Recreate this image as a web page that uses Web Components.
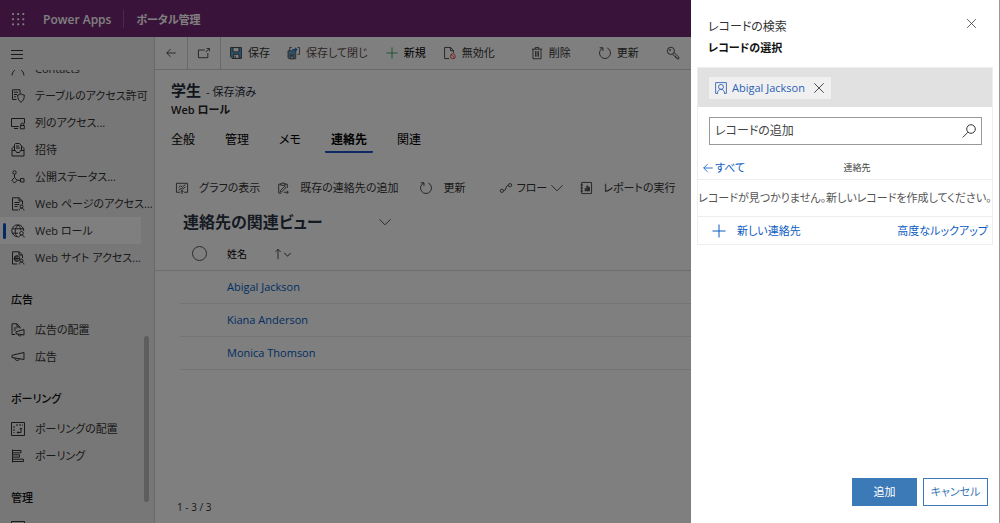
<!DOCTYPE html>
<html lang="ja">
<head>
<meta charset="utf-8">
<meta name="viewport" content="width=device-width, initial-scale=1">
<title>ポータル管理 - Power Apps</title>
<style>
  html, body { margin: 0; height: 100%; }
  body {
    font-family: "Open Sans", "Noto Sans CJK JP", sans-serif;
    font-size: 11px;
    line-height: 16px;
    font-feature-settings: "palt";
    color: #333;
    background: #fff;
    overflow: hidden;
  }
</style>
</head>
<body>
<portal-app></portal-app>

<script>
const RESET = `
  *, *::before, *::after { box-sizing: border-box; }
  button, input, a { font: inherit; font-feature-settings: inherit; color: inherit; }
  button { margin: 0; padding: 0; border: 0; background: none; cursor: pointer; }
  a { text-decoration: none; }
  h1, h2, h3, p, ul { margin: 0; padding: 0; font-size: inherit; font-weight: inherit; list-style: none; }
`;

function define(name, css, html) {
  customElements.define(name, class extends HTMLElement {
    constructor() {
      super();
      const attr = (key) => this.getAttribute(key) || '';
      const root = this.attachShadow({ mode: 'open' });
      const template = document.createElement('template');
      template.innerHTML = `<style>${RESET}${css}</style>${typeof html === 'function' ? html(attr) : html}`;
      root.append(template.content.cloneNode(true));
    }
  });
}

/* Line icons, all on a 14 x 14 grid */
const ICONS = {
  waffle: '<g fill="currentColor" stroke="none">' +
    [0, 6, 12].map(y => [0, 6, 12].map(x => `<rect x="${x}" y="${y}" width="2.400" height="2.400" rx="1"/>`).join('')).join('') + '</g>',
  menu: '<path d="M1 3.5h12M1 7.5h12M1 11.5h12"/>',
  back: '<path d="M12.5 7H2M6.5 2.5 2 7l4.500 4.500"/>',
  popout: '<path d="M8 3.500H.500v9h11V7M9 6l4-4M10 1.700h3.300V5"/>',
  save: '<path fill="#5aa9e0" d="M.700.700h12.600v12.600H2.500L.700 11.500z"/><path fill="#fff" d="M3.500.700h7v5h-7zM4 8.500h6.500v4.800H4z"/><path d="M6 10v3"/>',
  saveclose: '<path fill="#5aa9e0" d="M0 4.500h9v9.200H1.200L0 12.500z"/><path fill="#fff" d="M2.500 8.500h4v1.500h-4zM2.500 11.500h4v2.200h-4z"/><path d="M2 4.500v-4h2.500M11 .5h2.500v8H11"/><path stroke="#1f7ad0" stroke-width="1.500" d="M5 3h5M8.300 1 10.300 3l-2 2"/>',
  plus: '<path d="M7 .5v13M.5 7h13"/>',
  disable: '<path d="M6 13.500H.700V.500h7L11 4.200V7M7.500.500v3.800H11"/><circle cx="10.300" cy="10.800" r="2.900" stroke="#d8362c"/><path stroke="#d8362c" d="m8.200 8.800 4.200 4"/>',
  trash: '<path d="M1 2.500h12M5 2.500V.500h4v2M2.300 2.500v11.200h9.400V2.500M5.300 4.800v6.500M7 4.800v6.500M8.700 4.800v6.500"/>',
  refresh: '<path d="M4.300 1.200A6.400 6.400 0 1 0 9.700 1.200M.800.900h3.800v3.800"/>',
  key: '<circle cx="4.500" cy="4.500" r="4.200"/><circle cx="3.500" cy="3.500" r=".7"/><path d="m8.300 6.500 5.500 5.300v2h-2.200v-1.500H10v-1.600H8.500L6.700 8.400"/>',
  contact: '<path d="M1 13.500C1 10 4 7.500 5 7.300M13 13.500c0-3.500-3-6-4-6.200"/><circle cx="7" cy="4" r="3.300"/>',
  tableperm: '<path d="M5.500 10.500h-4V.800h7.500v4M3 3.200h4M3 5.500h3M3 7.800h2M10 4.800c1 .8 2 1.200 3.300 1.200 0 3.500-.6 5.300-3.300 7.300-2.700-2-3.300-3.800-3.300-7.300 1.300 0 2.300-.4 3.300-1.200z"/>',
  columnperm: '<path d="M7.500 10.500h-7v-8h13v5M3 12.500h4"/><path d="M9.300 9.500h4v3.300h-4zM10 9.500V8.300a1.300 1.300 0 0 1 2.600 0v1.200"/>',
  invite: '<path d="M1 5.500v7.500h12V5.500L10.500 3M1 5.500 3.500 3M1 7.500h3.500l1 2h3l1-2H13M3.500 7V1.500l1-1h4L10.500 3v4M5 3h3M5 5h4"/>',
  flowstate: '<circle cx="3.500" cy="2.500" r="1.700"/><path d="m3.500 7.500 2.700 2.800-2.700 2.800L.8 10.300zM3.500 4.200v3.300M6.200 10.300h3.300M9.500 8.600H13V12H9.500z"/>',
  pageperm: '<path d="M7 13H1.500V.800H8L11.500 4v3.500M8 .800V4h3.500M3.500 5.500h5M3.500 7.500h5M3.500 9.500h3"/><circle cx="10.500" cy="9.500" r="1.500"/><path d="M8 13.500c.3-1.600 1.200-2.400 2.500-2.400s2.200.8 2.500 2.400"/>',
  globe: '<path d="M7 12.800A6 6 0 1 1 12.800 7M6 12.800C3.500 9.500 3.500 4.500 7 1c2 1.800 2.800 3.500 3 5.500M1.500 4.800h11M1.300 9.200H7"/><circle cx="10.500" cy="9.300" r="1.800"/><path d="M7.800 13.500c.3-1.600 1.300-2.400 2.700-2.400s2.400.8 2.700 2.400"/>',
  siteperm: '<path d="M6 13H1.500V.800H8L11.500 4v3M8 .800V4h3.500"/><circle cx="6" cy="7.500" r="2.800"/><path d="M3.200 7.500h5.600M6 4.700v5.600M4.600 5.200c-.7 1.500-.7 3.100 0 4.600"/><circle cx="10.500" cy="9.500" r="1.500"/><path d="M8 13.500c.3-1.600 1.200-2.400 2.500-2.400s2.200.8 2.500 2.400"/>',
  adplace: '<path d="M4 11.500H1V.800h5L9 4v1.500M6 .800V4h3M2.800 5h3M2.800 7h2M5 8.800l8-2.300v5.500L5 10.700zM7 11.300c0 2 3 2.300 3.400.5"/>',
  ad: '<path d="M1 5.300 13 2.500v7L1 7.500zM3.800 8c0 3 4.200 3.200 4.700.8"/>',
  pollplace: '<path d="M.500.500h13v13H.500z"/><path stroke-dasharray="2 1" d="M3 4v7M5 3h7"/><path d="M6 10.500h4V6M8.700 7.200 10 5.900l1.300 1.300M7.300 9.300l-1.200 1.200 1.200 1.200"/>',
  poll: '<path d="M1.500.5v13M1.500 1.500H10v2.300H1.500M1.500 5.800h7v2.300h-7M1.500 10.200h11v2.300h-11"/>',
  chart: '<path d="M4.500 12H.500V1.500h13V12H9.500M3 6.500l2.500-2 2 1.500L11 3M3 9.500l3-2 2 1 3-3M7 14V9.800M5.300 11.500 7 9.800l1.700 1.700"/>',
  clipboard: '<path d="M5 13H2V2.500h2.500M9.500 2.500H12V7M4.500 3.800v-2h1.500a1 1 0 0 1 2 0h1.500v2zM4 10l5-5 1.500 1.500-5 5H4zM8 12h5M11.300 10l2 2-2 1.700"/>',
  flow: '<circle cx="2.200" cy="10.300" r="1.900"/><circle cx="11.800" cy="3.700" r="1.900"/><path d="M4.100 10.300C8 10.300 6 3.700 9.900 3.700"/>',
  report: '<path d="M2 .5h11.500v13H2zM.5 3.500h3M.5 7h3M.5 10.500h3M6 10.500V7.500h1v3zM8 10.500v-6h1v6zM10 10.500V6h1v4.500z"/>',
  chevron: '<path d="m.5 3.800 6.500 6.500 6.500-6.500"/>',
  up: '<path d="M7 13V1.500M4 4.500l3-3 3 3"/>',
  close: '<path d="m1.500 1.500 11 11M12.500 1.500l-11 11"/>',
  search: '<circle cx="9" cy="5" r="4.300"/><path d="M6 8.200.700 13.500"/>',
  person: '<path d="M3.300 13.300H.700V.700h12.600v12.600h-2.600"/><circle cx="7" cy="5.700" r="2.900"/><path d="M2.800 13.300c.2-3.200 1.900-4.700 4.200-4.700s4 1.500 4.200 4.700"/>'
};

define('line-icon',
  `:host { display: inline-flex; flex: none; width: 14px; height: 14px; }
   :host([size="s"]) { width: 7px; height: 7px; }
   :host([size="m"]) { width: 12px; height: 12px; }
   svg { width: 100%; height: 100%; fill: none; stroke: currentColor; stroke-width: 1; overflow: visible; }
   :host([size="s"]) svg { stroke-width: 2; }`,
  (attr) => `<svg viewBox="0 0 14 14" aria-hidden="true">${ICONS[attr('name')]}</svg>`);

define('app-header',
  `:host { display: flex; align-items: center; height: 37px; padding: 0 12px; background: #742774; color: #fff; font-weight: 600; }
   button { display: flex; margin-right: 19px; }
   .brand { font-size: 12px; line-height: 18px; padding-top: 2px; }
   .area { margin-left: 12px; padding: 2px 0 0 12px; border-left: 1px solid #935593; }`,
  `<button aria-label="アプリ起動ツール"><line-icon name="waffle" size="m"></line-icon></button>
   <span class="brand">Power Apps</span><span class="area">ポータル管理</span>`);

define('nav-item',
  `:host { display: block; }
   a { position: relative; display: flex; align-items: center; gap: 10px; height: 27px; margin-right: 13px; padding-left: 11px; white-space: nowrap; color: #333; }
   :host([current]) a { background: #fff; }
   :host([current]) a::before { content: ""; position: absolute; left: 3px; top: 6px; bottom: 5px; width: 3px; border-radius: 2px; background: #0b53ce; }`,
  (attr) => `<a href="#"><line-icon name="${attr('icon')}"></line-icon><slot></slot></a>`);

define('nav-group',
  `:host { display: block; }
   h3 { height: 45px; padding: 21px 0 0 11px; font-weight: 500; color: #111; }`,
  (attr) => `<h3>${attr('label')}</h3><slot></slot>`);

define('side-nav',
  `:host { position: relative; display: flex; flex-direction: column; min-height: 0; background: #efefef; border-right: 1px solid #d2d2d2; }
   .toggle { display: flex; align-items: center; height: 33px; flex: none; padding-left: 10px; }
   .list { flex: 1; min-height: 0; overflow: hidden; }
   .scrolled { margin-top: -15px; }
   .thumb { position: absolute; right: 5px; top: 299px; width: 5px; height: 166px; border-radius: 3px; background: #bcbcbc; }`,
  `<button class="toggle" aria-label="メニュー"><line-icon name="menu"></line-icon></button>
   <nav class="list"><div class="scrolled">
     <nav-item icon="contact">Contacts</nav-item>
     <nav-item icon="tableperm">テーブルのアクセス許可</nav-item>
     <nav-item icon="columnperm">列のアクセス...</nav-item>
     <nav-item icon="invite">招待</nav-item>
     <nav-item icon="flowstate">公開ステータス...</nav-item>
     <nav-item icon="pageperm">Web ページのアクセス...</nav-item>
     <nav-item icon="globe" current>Web ロール</nav-item>
     <nav-item icon="siteperm">Web サイト アクセス...</nav-item>
     <nav-group label="広告">
       <nav-item icon="adplace">広告の配置</nav-item>
       <nav-item icon="ad">広告</nav-item>
     </nav-group>
     <nav-group label="ポーリング">
       <nav-item icon="pollplace">ポーリングの配置</nav-item>
       <nav-item icon="poll">ポーリング</nav-item>
     </nav-group>
     <nav-group label="管理">
       <nav-item icon="pollplace">Azure Portal の</nav-item>
     </nav-group>
   </div></nav>
   <div class="thumb"></div>`);

define('cmd-button',
  `:host { display: block; flex: none; color: #333; }
   :host([accent]) line-icon:first-child { color: #1c9a52; }
   button { display: flex; align-items: center; gap: var(--cmd-gap, 6px); white-space: nowrap; }`,
  (attr) => `<button aria-label="${attr('label')}"><line-icon name="${attr('icon')}" size="m"></line-icon><slot></slot>${attr('menu') ? '<line-icon name="chevron" size="m"></line-icon>' : ''}</button>`);

define('command-bar',
  `:host { display: flex; align-items: center; height: 33px; overflow: hidden; border-bottom: 1px solid #d2d2d2; }
   .cell { display: flex; align-items: center; justify-content: center; flex: none; width: 33px; height: 100%; border-right: 1px solid #d2d2d2; }
   .group { display: flex; align-items: center; gap: 18px; margin-left: 9px; }
   .group + .group { margin-left: 36px; gap: 28px; }
   .dark { color: #000; } .brown { color: #5b4a44; }`,
  `<button class="cell" aria-label="戻る"><line-icon name="back" size="m"></line-icon></button>
   <button class="cell" aria-label="新しいウィンドウで開く"><line-icon name="popout" size="m"></line-icon></button>
   <div class="group">
     <cmd-button icon="save" label="保存">保存</cmd-button>
     <cmd-button icon="saveclose" label="保存して閉じる" class="brown">保存して閉じ</cmd-button>
     <cmd-button icon="plus" label="新規" accent class="dark">新規</cmd-button>
     <cmd-button icon="disable" label="無効化">無効化</cmd-button>
   </div>
   <div class="group">
     <cmd-button icon="trash" label="削除">削除</cmd-button>
     <cmd-button icon="refresh" label="更新">更新</cmd-button>
     <cmd-button icon="key" label="アクセスの確認"></cmd-button>
   </div>`);

define('record-header',
  `:host { display: block; padding: 9px 16px 0; }
   .title { display: flex; align-items: baseline; gap: 5px; line-height: 22px; color: #222b3a; }
   h1 { font-size: 15px; font-weight: 600; }
   .entity { font-weight: 600; line-height: 14px; color: #222; }
   .tabs { display: flex; gap: 18px; margin: 14px 0 0 -6px; }
   .tabs button { height: 22px; padding: 0 6px 2px; border-bottom: 2px solid transparent; font-size: 12px; color: #000; }
   .tabs [aria-selected=true] { font-weight: 700; border-color: #1d55c8; border-radius: 1px; }`,
  `<div class="title"><h1>学生</h1><span>- 保存済み</span></div>
   <p class="entity">Web ロール</p>
   <div class="tabs" role="tablist">
     <button role="tab" aria-selected="false">全般</button>
     <button role="tab" aria-selected="false">管理</button>
     <button role="tab" aria-selected="false">メモ</button>
     <button role="tab" aria-selected="true">連絡先</button>
     <button role="tab" aria-selected="false">関連</button>
   </div>`);

define('contact-grid',
  `:host { display: flex; flex-direction: column; flex: 1; min-height: 0; padding-top: 27px; }
   .tools { display: flex; align-items: center; gap: 17px; padding-left: 21px; --cmd-gap: 11px; height: 16px; }
   .wide { margin-left: 5px; } .wider { margin-left: 18px; --cmd-gap: 4px; }
   .view { display: flex; align-items: center; gap: 56px; margin: 14px 0 0 28px; height: 24px; font-size: 16px; font-weight: 600; color: #2b3445; }
   table { width: 100%; margin-top: 12px; border-collapse: collapse; table-layout: fixed; }
   th, td { padding: 0; text-align: left; font-weight: 400; }
   thead th { vertical-align: top; padding-bottom: 8px; border-bottom: 1px solid #dcdcdc; }
   .edge { width: 25px; } .pick { width: 47px; }
   input { display: block; appearance: none; width: 15px; height: 15px; margin: 0 0 0 12px; border: 1px solid #555; border-radius: 50%; }
   .sort { display: flex; align-items: center; height: 16px; font-size: 10px; color: #000; }
   .sort .name { margin-right: 25px; }
   .sort line-icon { color: #333; }
   tbody tr { height: 33px; }
   tbody td:not(:first-child) { border-bottom: 1px solid #e8e8e8; }
   td a { color: #005cc5; }
   .count { margin-top: auto; padding: 0 0 8px 22px; font-size: 10px; }`,
  `<div class="tools">
     <cmd-button icon="chart" label="グラフの表示">グラフの表示</cmd-button>
     <cmd-button icon="clipboard" label="既存の連絡先の追加">既存の連絡先の追加</cmd-button>
     <cmd-button icon="refresh" label="更新" class="wide">更新</cmd-button>
     <cmd-button icon="flow" label="フロー" menu="1" class="wider">フロー</cmd-button>
     <cmd-button icon="report" label="レポートの実行">レポートの実行</cmd-button>
   </div>
   <button class="view">連絡先の関連ビュー<line-icon name="chevron" size="m"></line-icon></button>
   <table>
     <thead><tr>
       <th class="edge"></th>
       <th class="pick"><input type="checkbox" aria-label="すべて選択"></th>
       <th><button class="sort"><span class="name">姓名</span><line-icon name="up" size="m"></line-icon><line-icon name="chevron" size="s"></line-icon></button></th>
     </tr></thead>
     <tbody>
       <tr><td></td><td></td><td><a href="#">Abigal Jackson</a></td></tr>
       <tr><td></td><td></td><td><a href="#">Kiana Anderson</a></td></tr>
       <tr><td></td><td></td><td><a href="#">Monica Thomson</a></td></tr>
     </tbody>
   </table>
   <div class="count">1 - 3 / 3</div>`);

define('lookup-panel',
  `:host { position: fixed; inset: 0 0 0 auto; display: flex; flex-direction: column; width: 309px; padding: 18px 6px 17px 6px; background: #fff; border-right: 1px solid #999; }
   header { display: flex; justify-content: space-between; padding: 0 16px 0 11px; height: 49px; color: #333; }
   h2 { font-size: 12px; line-height: 18px; }
   h3 { margin-top: 4px; font-weight: 600; color: #111; }
   header button { display: flex; align-self: flex-start; }
   header line-icon { width: 11px; height: 11px; }
   .box { border: 1px solid #eee; }
   .picked { display: flex; align-items: center; height: 39px; padding-left: 11px; background: #e1e1e1; }
   .chip { display: flex; align-items: center; height: 22px; padding: 0 6px; background: #f0f0f0; color: #2a60b8; }
   .chip a { margin: 0 8px 0 5px; }
   .chip button { display: flex; color: #333; }
   .search { display: flex; align-items: center; margin: 10px 10px 0 11px; height: 28px; padding: 0 5px; border: 1px solid #999; }
   .search input { flex: 1; min-width: 0; padding: 0; border: 0; outline: 0; font-size: 12px; }
   .search input::placeholder { color: #444; opacity: 1; }
   .search button { display: flex; color: #333; }
   .row { display: flex; align-items: center; border-bottom: 1px solid #eee; }
   .row:last-child { border: 0; }
   .row button, .row a { display: flex; align-items: center; color: #0b5cc2; }
   .crumb { display: grid; grid-template-columns: 1fr auto 1fr; height: 35px; padding: 11px 4px 0; }
   .crumb button { gap: 1px; }
   .crumb .entity { margin-left: 24px; font-size: 9px; color: #444; }
   .empty { height: 37px; justify-content: center; white-space: nowrap; color: #555; }
   .actions { justify-content: space-between; height: 27px; padding: 0 4px 0 14px; }
   .actions button { gap: 11px; }
   footer { display: flex; justify-content: flex-end; gap: 6px; margin-top: auto; padding-right: 5px; }
   footer button { width: 65px; height: 28px; border: 1px solid #3b79b7; color: #3b79b7; }
   footer .primary { background: #3b79b7; color: #fff; }`,
  `<header><div><h2>レコードの検索</h2><h3>レコードの選択</h3></div><button aria-label="閉じる"><line-icon name="close"></line-icon></button></header>
   <section class="box">
     <div class="picked"><span class="chip"><line-icon name="person" size="m"></line-icon><a href="#">Abigal Jackson</a><button aria-label="削除"><line-icon name="close" size="m"></line-icon></button></span></div>
     <div class="search"><input type="text" aria-label="レコードの追加" placeholder="レコードの追加"><button aria-label="検索"><line-icon name="search"></line-icon></button></div>
     <div class="row crumb"><button><line-icon name="back" size="m"></line-icon>すべて</button><span class="entity">連絡先</span></div>
     <p class="row empty">レコードが見つかりません。新しいレコードを作成してください。</p>
     <div class="row actions"><button><line-icon name="plus"></line-icon>新しい連絡先</button><a href="#">高度なルックアップ</a></div>
   </section>
   <footer><button class="primary">追加</button><button>キャンセル</button></footer>`);

define('portal-app',
  `:host { display: grid; grid-template: auto minmax(0, 1fr) / 155px minmax(0, 1fr); height: 100vh; }
   app-header { grid-column: 1 / -1; }
   main { display: flex; flex-direction: column; min-width: 0; min-height: 0; }
   .backdrop { position: fixed; inset: 0; background: rgba(0, 0, 0, .5); }`,
  `<app-header></app-header>
   <side-nav></side-nav>
   <main><command-bar></command-bar><record-header></record-header><contact-grid></contact-grid></main>
   <div class="backdrop"></div>
   <lookup-panel role="dialog" aria-label="レコードの検索"></lookup-panel>`);
</script>
</body>
</html>
